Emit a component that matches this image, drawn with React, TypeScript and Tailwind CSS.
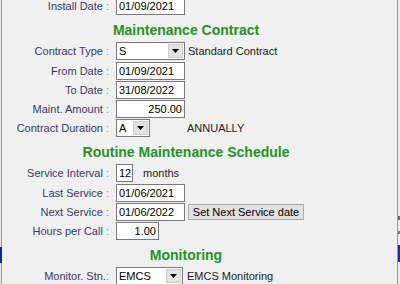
import React from "react";

const Label = ({ text, tight }: { text: string; tight?: boolean }) => (
  <div className="w-[107px] shrink-0 whitespace-nowrap text-right text-[#38386e]">
    {text}
    <span className="text-[#8c8ca8]">{tight ? ":" : " :"}</span>
  </div>
);

const Box = ({
  value,
  w,
  right,
}: {
  value: string;
  w: string;
  right?: boolean;
}) => (
  <div
    className={`ml-[7px] h-[18px] shrink-0 border border-[#7a7a7a] bg-white leading-[16px] text-black ${w} ${
      right ? "pr-[2px] text-right" : "pl-[2px]"
    }`}
  >
    {value}
  </div>
);

const Caret = () => (
  <svg width="7" height="4" viewBox="0 0 7 4">
    <path d="M0 0 H7 L3.5 4 Z" fill="#000" />
  </svg>
);

const Select = ({ value, w }: { value: string; w: string }) => (
  <div
    className={`ml-[7px] flex h-[18px] shrink-0 items-center border border-[#7a7a7a] bg-white text-black ${w}`}
  >
    <span className="flex-1 pl-[2px] leading-[16px]">{value}</span>
    <div className="mr-[1px] flex h-[14px] w-[15px] items-center justify-center border border-[#cfcfcf] bg-[#e3e3e3]">
      <Caret />
    </div>
  </div>
);

const Row = ({ mt, children }: { mt: string; children: React.ReactNode }) => (
  <div className={`flex h-[18px] items-center ${mt}`}>{children}</div>
);

const Heading = ({ mt, text }: { mt: string; text: string }) => (
  <div
    className={`h-[16px] text-center text-[14px] font-bold leading-[16px] text-[#1f951f] ${mt}`}
  >
    {text}
  </div>
);

export default function App() {
  return (
    <div
      className="relative flex h-[284px] w-[400px] overflow-hidden bg-[#f0f0f0] text-[11px]"
      style={{ fontFamily: '"Liberation Sans", Arial, sans-serif' }}
    >
      <div className="h-full w-[2px] shrink-0 border-r border-[#9a9a9a] bg-[#e6e6e6]" />
      <div className="flex w-[368px] shrink-0 flex-col">
        <Row mt="mt-[-3px]">
          <Label text="Install Date" />
          <Box value="01/09/2021" w="w-[69px]" />
        </Row>
        <Heading mt="mt-[7px]" text="Maintenance Contract" />
        <Row mt="mt-[4px]">
          <Label text="Contract Type" />
          <Select value="S" w="w-[69px]" />
          <span className="ml-[3px] whitespace-nowrap text-[#222]">Standard Contract</span>
        </Row>
        <Row mt="mt-[2px]">
          <Label text="From Date" />
          <Box value="01/09/2021" w="w-[69px]" />
        </Row>
        <Row mt="mt-[1px]">
          <Label text="To Date" />
          <Box value="31/08/2022" w="w-[69px]" />
        </Row>
        <Row mt="mt-[1px]">
          <Label text="Maint. Amount" />
          <Box value="250.00" w="w-[69px]" right />
        </Row>
        <Row mt="mt-[1px]">
          <Label text="Contract Duration" />
          <Select value="A" w="w-[34px]" />
          <span className="ml-[37px] whitespace-nowrap text-[#222]">ANNUALLY</span>
        </Row>
        <Heading mt="mt-[7px]" text="Routine Maintenance Schedule" />
        <Row mt="mt-[4px]">
          <Label text="Service Interval" />
          <Box value="12" w="w-[17px]" />
          <span className="ml-[10px] text-[#222]">months</span>
        </Row>
        <Row mt="mt-[2px]">
          <Label text="Last Service" />
          <Box value="01/06/2021" w="w-[69px]" />
        </Row>
        <Row mt="mt-[1px]">
          <Label text="Next Service" />
          <Box value="01/06/2022" w="w-[69px]" />
          <button className="ml-[3px] h-[16px] w-[116px] shrink-0 whitespace-nowrap border border-[#adadad] bg-[#e1e1e1] text-center text-[11px] leading-[14px] text-black">
            Set Next Service date
          </button>
        </Row>
        <Row mt="mt-[1px]">
          <Label text="Hours per Call" />
          <Box value="1.00" w="w-[43px]" right />
        </Row>
        <Heading mt="mt-[7px]" text="Monitoring" />
        <Row mt="mt-[4px]">
          <Label text="Monitor. Stn." tight />
          <Select value="EMCS" w="w-[67px]" />
          <span className="ml-[4px] whitespace-nowrap text-[#222]">EMCS Monitoring</span>
        </Row>
      </div>
      <div className="h-full flex-1" />
      <div className="h-full w-[3px] shrink-0 border-l border-[#9a9a9a] bg-[#ececec]" />
      <div className="absolute left-0 top-[247px] h-[16px] w-[2px] bg-[#1c1c9c]" />
      <div className="absolute right-0 top-[245px] h-[17px] w-[2px] bg-[#2a2aa0]" />
      <div className="absolute right-0 top-[216px] h-[4px] w-[2px] bg-[#6a6a6a]" />
      <div className="absolute right-0 top-[231px] h-[3px] w-[2px] bg-[#7a7a7a]" />
    </div>
  );
}
